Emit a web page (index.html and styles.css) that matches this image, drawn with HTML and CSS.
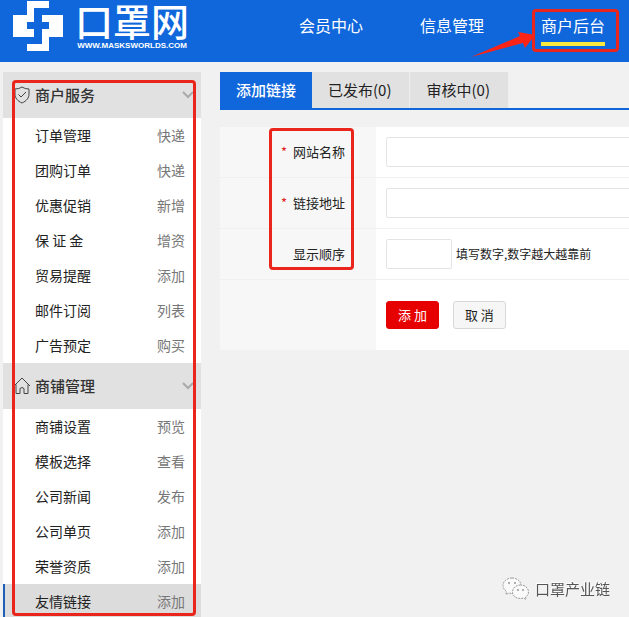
FILE: index.html
```html
<!DOCTYPE html>
<html lang="zh-CN">
<head>
<meta charset="utf-8">
<meta name="viewport" content="width=device-width, initial-scale=1">
<title>口罩网 商户后台</title>
<link rel="stylesheet" href="styles.css">
</head>
<body>
<header class="header">
  <a class="logo" href="#">
    <svg class="logo-mark" viewBox="0 0 50 50" aria-hidden="true">
      <path fill="#fff" d="M14 0H36V7H21V21H14V28H21V36H0V14H14Z"/>
      <path fill="#fff" d="M36 50H14V43H29V28H36V21H29V14H50V36H36Z"/>
    </svg>
    <span class="logo-text">
      <span class="logo-name">口罩网</span>
      <span class="logo-url">WWW.MASKSWORLDS.COM</span>
    </span>
  </a>
  <nav class="nav">
    <a href="#">会员中心</a>
    <a href="#">信息管理</a>
    <a class="current" href="#">商户后台
      <span class="mark mark-nav"></span>
      <svg class="arrow" viewBox="0 0 64 28" aria-hidden="true"><path fill="#fb2416" d="M0 26L49 5L47 1L64 4L54 17L52 12Z"/></svg>
    </a>
  </nav>
</header>
<div class="page">
  <aside class="sidebar">
    <h2 class="group">
      <svg class="group-icon" viewBox="0 0 18 18" aria-hidden="true"><path d="M9 1Q12 3 16 3V8C16 12 13.500 15 9 17C4.500 15 2 12 2 8V3Q6 3 9 1ZM5.500 8.500L8 11L13 6"/></svg>
      商户服务
      <svg class="chevron" viewBox="0 0 12 8" aria-hidden="true"><path d="M1 1L6 6L11 1"/></svg>
    </h2>
    <ul class="menu">
      <li><a href="#">订单管理</a><a href="#">快递</a></li>
      <li><a href="#">团购订单</a><a href="#">快递</a></li>
      <li><a href="#">优惠促销</a><a href="#">新增</a></li>
      <li><a href="#">保 证 金</a><a href="#">增资</a></li>
      <li><a href="#">贸易提醒</a><a href="#">添加</a></li>
      <li><a href="#">邮件订阅</a><a href="#">列表</a></li>
      <li><a href="#">广告预定</a><a href="#">购买</a></li>
    </ul>
    <h2 class="group">
      <svg class="group-icon" viewBox="0 0 18 18" aria-hidden="true"><path d="M1 9L9 1L17 9M3 7.500V16.500H7V11.500Q9 9.500 11 11.500V16.500H15V7.500"/></svg>
      商铺管理
      <svg class="chevron" viewBox="0 0 12 8" aria-hidden="true"><path d="M1 1L6 6L11 1"/></svg>
    </h2>
    <ul class="menu">
      <li><a href="#">商铺设置</a><a href="#">预览</a></li>
      <li><a href="#">模板选择</a><a href="#">查看</a></li>
      <li><a href="#">公司新闻</a><a href="#">发布</a></li>
      <li><a href="#">公司单页</a><a href="#">添加</a></li>
      <li><a href="#">荣誉资质</a><a href="#">添加</a></li>
      <li class="active"><a href="#">友情链接</a><a href="#">添加</a></li>
    </ul>
    <span class="mark mark-sidebar"></span>
  </aside>
  <main class="main">
    <nav class="tabs">
      <a class="selected" href="#">添加链接</a>
      <a href="#">已发布(0)</a>
      <a href="#">审核中(0)</a>
    </nav>
    <form class="form">
      <div class="row">
        <label class="label" for="name"><span class="required">*</span>网站名称</label>
        <div class="field"><input id="name" type="text"></div>
      </div>
      <div class="row">
        <label class="label" for="url"><span class="required">*</span>链接地址</label>
        <div class="field"><input id="url" type="text"></div>
      </div>
      <div class="row">
        <label class="label" for="order">显示顺序</label>
        <div class="field"><input class="short" id="order" type="text"><span class="hint">填写数字,数字越大越靠前</span></div>
      </div>
      <div class="row actions">
        <div class="label"></div>
        <div class="field"><button class="submit" type="submit">添 加</button><button class="cancel" type="button">取 消</button></div>
      </div>
      <span class="mark mark-labels"></span>
    </form>
  </main>
</div>
<div class="watermark">
  <svg viewBox="0 0 28 24" aria-hidden="true">
    <path d="M10 1C4.500 1 1 4.500 1 8.500C1 11 2.500 13 4.500 14.500L4 17.500L7 16C8 16.300 9 16.500 10 16.500C15.500 16.500 19 13 19 8.500C19 4.500 15.500 1 10 1Z"/>
    <path d="M18.500 8C14 8 10.500 11 10.500 15C10.500 19 14 21.500 18.500 21.500C19.500 21.500 20.500 21.300 21.500 21L24 22.500L23.500 20C25.500 18.800 26.500 17 26.500 15C26.500 11 23 8 18.500 8Z"/>
    <path class="eyes" d="M6 6H8M12 6H14M15 13H17M20 13H22"/>
  </svg>
  <span>口罩产业链</span>
</div>
</body>
</html>
```
FILE: styles.css
```css
* {
  box-sizing: border-box;
}

body {
  margin: 0;
  min-height: 100vh;
  overflow: hidden;
  background: #f1f1f1;
  color: #222;
  font: 14px/20px "Noto Sans CJK SC", sans-serif;
}

a {
  color: inherit;
  text-decoration: none;
}

/* Header */
.header {
  display: flex;
  justify-content: space-between;
  height: 62px;
  padding: 0 24px 0 13px;
  background: #1067dc;
  color: #fff;
}

.logo {
  display: flex;
  gap: 12px;
}

.logo-mark {
  width: 50px;
  height: 50px;
  margin-top: 1px;
}

.logo-text {
  display: flex;
  flex-direction: column;
  align-items: center;
}

.logo-name {
  font-size: 38px;
  font-weight: 500;
  line-height: 40px;
}

.logo-url {
  font: 700 8px/12px "Liberation Sans", sans-serif;
}

.nav {
  display: flex;
  gap: 57px;
  font-size: 16px;
  line-height: 24px;
  padding-top: 13px;
}

.nav a {
  position: relative;
  height: 33px;
  white-space: nowrap;
}

.nav .current {
  border-bottom: 4px solid #fbe83c;
}

/* Highlight frames */
.mark {
  position: absolute;
  border: 3px solid #ea261c;
  border-radius: 4px;
  pointer-events: none;
}

.mark-nav {
  inset: -4px -14px -10px -9px;
}

.arrow {
  position: absolute;
  top: 18px;
  right: 70px;
  width: 64px;
  height: 28px;
}

.mark-sidebar {
  inset: 8px 5px 3px 9px;
}

.mark-labels {
  top: 1px;
  left: 49px;
  width: 85px;
  height: 142px;
}

/* Page */
.page {
  display: flex;
  align-items: flex-start;
  gap: 19px;
  padding: 10px 0 0 3px;
}

.sidebar {
  position: relative;
  flex: 0 0 198px;
  background: #fff;
}

.group {
  display: flex;
  align-items: center;
  gap: 4px;
  height: 46px;
  margin: 0;
  padding: 0 7px 0 10px;
  background: #e1e1e1;
  color: #333;
  font-size: 15px;
  font-weight: 500;
}

.group-icon,
.chevron {
  fill: none;
  stroke: #444;
}

.group-icon {
  width: 18px;
  height: 18px;
}

.chevron {
  width: 12px;
  height: 8px;
  margin-left: auto;
  stroke: #aaa;
  stroke-width: 2;
}

.menu {
  margin: 0;
  padding: 0;
  list-style: none;
}

.menu li {
  display: flex;
  justify-content: space-between;
  align-items: center;
  height: 35px;
  padding: 0 16px 2px 32px;
}

.menu a:last-child {
  color: #777;
}

.menu .active {
  padding-left: 30px;
  border-left: 2px solid #1b5fb8;
  background: #dcdcdc;
}

.main {
  flex: 1;
  min-width: 0;
  margin-right: -20px;
}

.tabs {
  display: flex;
  border-bottom: 2px solid #1067dc;
  font-size: 15px;
  line-height: 36px;
}

.tabs a {
  padding: 0 18px 0 16px;
  border-right: 1px solid #eee;
  background: #e1e1e1;
}

.tabs .selected {
  padding-right: 16px;
  border-right: 0;
  background: #1067dc;
  color: #fff;
  font-weight: 500;
}

/* Form */
.form {
  position: relative;
  margin-top: 17px;
  background: #fff;
  font-size: 13px;
}

.row {
  display: flex;
  height: 51px;
  border-bottom: 1px solid #f0f0f0;
}

.row.actions {
  height: 70px;
  border-bottom: 0;
}

.label {
  display: flex;
  align-items: center;
  justify-content: flex-end;
  gap: 6px;
  flex: 0 0 156px;
  padding-right: 31px;
  background: #f7f7f7;
}

.required {
  color: #e02020;
}

.field {
  display: flex;
  align-items: center;
  flex: 1;
  padding: 0 10px;
}

.field input {
  width: 100%;
  height: 30px;
  border: 1px solid #e4e4e4;
  border-radius: 2px;
  background: #fff;
}

.field .short {
  width: 66px;
  margin-right: 4px;
}

.hint {
  font-size: 12px;
}

button {
  height: 28px;
  padding: 0 11px;
  border: 1px solid #d8d8d8;
  border-radius: 3px;
  background: #f6f6f6;
  color: #222;
  font: inherit;
}

.submit {
  margin-right: 14px;
  border-color: #e60000;
  background: #e60000;
  color: #fff;
}

/* Watermark */
.watermark {
  position: fixed;
  right: 19px;
  bottom: 16px;
  display: flex;
  align-items: center;
  gap: 5px;
  color: #555;
  font-size: 15px;
  line-height: 24px;
  text-shadow: -1px -1px 0 #fff;
}

.watermark svg {
  width: 28px;
  height: 24px;
  fill: #fafafa;
  stroke: #999;
  stroke-dasharray: 2 1;
}

.watermark .eyes {
  stroke: #666;
  stroke-width: 1;
  stroke-dasharray: none;
}
```
